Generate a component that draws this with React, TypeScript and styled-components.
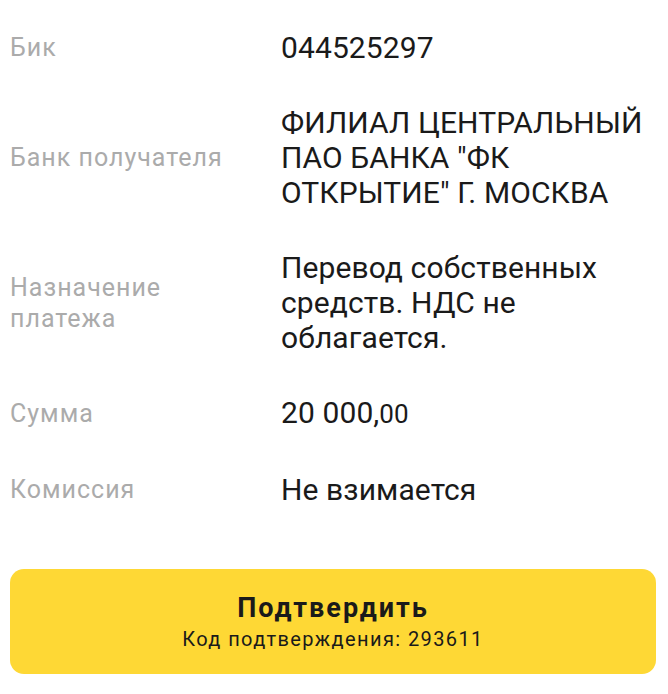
import React from 'react'
import styled, { createGlobalStyle } from 'styled-components'

const GlobalStyle = createGlobalStyle`
  html, body {
    margin: 0;
    padding: 0;
    background: #ffffff;
  }
  body {
    font-family: Roboto, 'Noto Sans', sans-serif;
    -webkit-font-smoothing: antialiased;
  }
`

type Detail = { label: string; value: React.ReactNode; cents?: string }

const details: Detail[] = [
  { label: 'Бик', value: '044525297' },
  { label: 'Банк получателя', value: 'ФИЛИАЛ ЦЕНТРАЛЬНЫЙ ПАО БАНКА "ФК ОТКРЫТИЕ" Г. МОСКВА' },
  { label: 'Назначение платежа', value: 'Перевод собственных средств. НДС не облагается.' },
  { label: 'Сумма', value: '20 000,', cents: '00' },
  { label: 'Комиссия', value: 'Не взимается' },
]

const App = () => {
  return (
    <>
      <GlobalStyle />
      <Screen>
        <DetailsList>
          {details.map((d) => (
            <Row key={d.label}>
              <Label>{d.label}</Label>
              <Value>
                {d.value}
                {d.cents && <Cents>{d.cents}</Cents>}
              </Value>
            </Row>
          ))}
        </DetailsList>
        <ConfirmButton type="button">
          <ButtonTitle>Подтвердить</ButtonTitle>
          <ButtonCode>Код подтверждения: 293611</ButtonCode>
        </ConfirmButton>
      </Screen>
    </>
  )
}

export default App

const Screen = styled.div`
  width: 668px;
  height: 694px;
  padding: 10px 12px 0 10px;
  box-sizing: border-box;
  display: flex;
  flex-direction: column;
  overflow: hidden;
`

const DetailsList = styled.div`
  display: flex;
  flex-direction: column;
`

const Row = styled.div`
  display: grid;
  grid-template-columns: 226px 1fr;
  column-gap: 45px;
  align-items: center;
  padding: 20px 0;
`

const Label = styled.div`
  font-size: 25px;
  line-height: 31px;
  color: #ababab;
  letter-spacing: 1px;
`

const Value = styled.div`
  font-size: 30px;
  line-height: 35px;
  color: #1a1a1a;
  letter-spacing: 0.1px;
`

const Cents = styled.span`
  font-size: 26px;
`

const ConfirmButton = styled.button`
  margin-top: 42px;
  width: 646px;
  height: 105px;
  border: none;
  border-radius: 14px;
  background: #fed835;
  display: flex;
  flex-direction: column;
  align-items: center;
  justify-content: center;
  gap: 2px;
  font-family: Roboto, 'Noto Sans', sans-serif;
  color: #1a1a1a;
  padding: 0;
`

const ButtonTitle = styled.span`
  font-size: 27px;
  line-height: 32px;
  font-weight: 700;
  letter-spacing: 2px;
`

const ButtonCode = styled.span`
  font-size: 20px;
  line-height: 26px;
  letter-spacing: 1.4px;
`
